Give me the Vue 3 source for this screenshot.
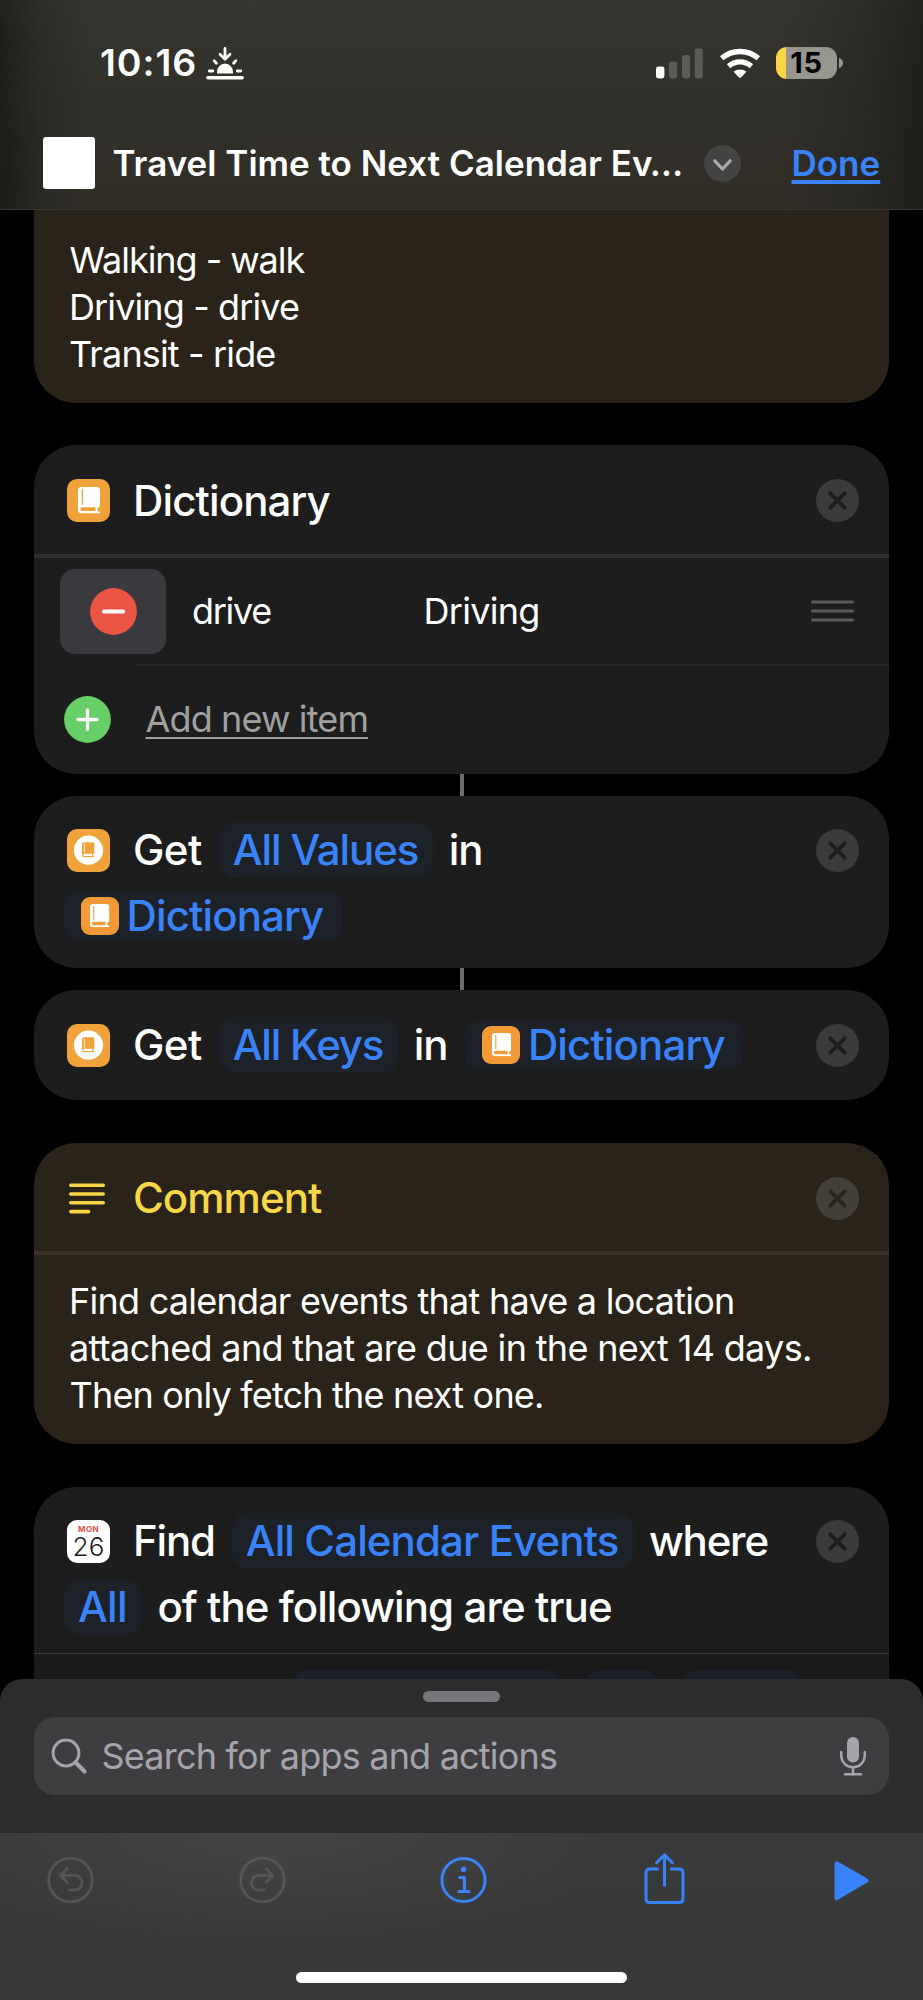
<script setup>
const title = 'Travel Time to Next Calendar Ev…'
const intro = [
  { text: 'Walking - walk', cls: 'l-walk' },
  { text: 'Driving - drive', cls: 'l-drive' },
  { text: 'Transit - ride', cls: 'l-ride' }
]
const comment = [
  { text: 'Find calendar events that have a location', cls: 'l-find' },
  { text: 'attached and that are due in the next 14 days.', cls: 'l-attached' },
  { text: 'Then only fetch the next one.', cls: 'l-then' }
]
</script>

<template>
  <div class="screen">
    <svg class="defs" aria-hidden="true">
      <symbol id="book" viewBox="0 0 22 26.4">
        <rect class="ink" x="0" y="0" width="22" height="21" rx="3.6" />
        <path class="ink" d="M0 4H19.6V21Q19 23 20.2 24.4H21Q22 24.5 22 25.4Q22 26.4 21 26.4H4Q0 26.4 0 22.4Z" />
        <path class="gap" d="M4.3 2.2H5V18H4.3Q3.7 18 3.7 17.4V2.8Q3.7 2.2 4.3 2.2Z" />
        <path class="gap" d="M4 20.2H17.8Q17 22.1 17.8 24H4Q2.2 24 2.2 22.1Q2.2 20.2 4 20.2Z" />
      </symbol>
      <symbol id="close" viewBox="0 0 43 43">
        <circle class="disc" cx="21.5" cy="21.5" r="21.5" />
        <path class="cross" d="M14.3 14.3L28.7 28.7M28.7 14.3L14.3 28.7" />
      </symbol>
      <symbol id="getter" viewBox="0 0 43 43">
        <circle cx="21.5" cy="21.2" r="14.6" fill="#fff" />
      </symbol>
    </svg>

    <header class="top">
      <div class="status">
        <span class="time">10:16</span>
        <svg class="sunset" width="38" height="33" viewBox="0 0 38 33">
          <g fill="none" stroke="#fff" stroke-width="2.8" stroke-linecap="round" stroke-linejoin="round">
            <path d="M19 1.5V11.5M14 7.2L19 12.2L24 7.2M3.3 24H6.8M31.2 24H34.7M8.2 13.8L10.4 16.2M29.8 13.8L27.6 16.2" />
            <path d="M1.8 30.8H36.2" stroke-width="3.4" />
          </g>
          <path d="M11 26.5V25.2A8 8.6 0 0 1 27 25.2V26.5Z" fill="#fff" />
        </svg>
        <div class="indicators">
          <svg width="47" height="31" viewBox="0 0 47 31">
            <rect x="0" y="18.5" width="8.4" height="12" rx="2.4" fill="#fff" />
            <g fill="#5b5a54">
              <rect x="13" y="13.5" width="8.2" height="17" rx="2.4" />
              <rect x="26" y="7" width="8.2" height="23.5" rx="2.4" />
              <rect x="38.6" y="0.5" width="8.2" height="30" rx="2.4" />
            </g>
          </svg>
          <svg class="wifi" width="42" height="31" viewBox="0 0 42 31">
            <path d="M2.7 10.3A28 28 0 0 1 39.3 10.3" fill="none" stroke="#fff" stroke-width="5.4" />
            <path d="M9.6 18.2A17.4 17.4 0 0 1 32.4 18.2" fill="none" stroke="#fff" stroke-width="5.2" />
            <path d="M14.6 23.8A10 10 0 0 1 27.4 23.8L22 29.6Q21 30.5 20 29.6Z" fill="#fff" />
          </svg>
          <div class="battery"><span>15</span></div>
          <svg width="4" height="10" viewBox="0 0 4 10"><path d="M0 0Q4 1.4 4 5Q4 8.6 0 10Z" fill="#97968f" /></svg>
        </div>
      </div>
      <div class="titlebar">
        <div class="thumb"></div>
        <h1>{{ title }}</h1>
        <svg class="chevron" width="37" height="37" viewBox="0 0 37 37">
          <circle cx="18.5" cy="18.5" r="18.5" fill="#444444" />
          <path d="M10.8 15.8L18.5 24L26.2 15.8" fill="none" stroke="#aaa9af" stroke-width="3.2" stroke-linecap="round" stroke-linejoin="round" />
        </svg>
        <a class="done">Done</a>
      </div>
    </header>

    <main class="list">
      <section class="card amber first">
        <p v-for="l in intro" :key="l.text" :class="l.cls">{{ l.text }}</p>
      </section>

      <section class="card dict">
        <div class="head">
          <span class="app"><svg class="book" width="22" height="26.4"><use href="#book" /></svg></span>
          <h2 class="w-dict">Dictionary</h2>
          <svg class="close" width="43" height="43"><use href="#close" /></svg>
        </div>
        <div class="item">
          <div class="remove">
            <svg width="47" height="47" viewBox="0 0 47 47">
              <circle cx="23.5" cy="23.5" r="23.4" fill="#ea5545" />
              <path d="M13.8 23.5H33.2" stroke="#fff" stroke-width="3.8" stroke-linecap="round" />
            </svg>
          </div>
          <span class="key">drive</span>
          <span class="value">Driving</span>
          <svg class="grip" width="43" height="22" viewBox="0 0 43 22">
            <path d="M1.5 2H41.5M1.5 11H41.5M1.5 20H41.5" stroke="#5a5a5e" stroke-width="3" stroke-linecap="round" />
          </svg>
        </div>
        <div class="rule"></div>
        <div class="add">
          <svg width="47" height="47" viewBox="0 0 47 47">
            <circle cx="23.5" cy="23.5" r="23.4" fill="#68ce67" />
            <path d="M14 23.5H33M23.5 14V33" stroke="#fff" stroke-width="3.4" stroke-linecap="round" />
          </svg>
          <span>Add new item</span>
        </div>
      </section>

      <div class="link"></div>

      <section class="card values">
        <div class="line">
          <span class="app"><svg width="43" height="43"><use href="#getter" /></svg><svg class="book mini" width="12.6" height="15.6"><use href="#book" /></svg></span>
          <span class="w-get">Get</span>
          <span class="pill g17 w-values">All Values</span>
          <span class="g16 w-in">in</span>
          <svg class="close" width="43" height="43"><use href="#close" /></svg>
        </div>
        <div class="line second">
          <span class="token"><span class="app small"><svg class="book" width="19.4" height="23.4"><use href="#book" /></svg></span><span class="w-dict">Dictionary</span></span>
        </div>
      </section>

      <div class="link"></div>

      <section class="card keys">
        <div class="line">
          <span class="app"><svg width="43" height="43"><use href="#getter" /></svg><svg class="book mini" width="12.6" height="15.6"><use href="#book" /></svg></span>
          <span class="w-get">Get</span>
          <span class="pill g17 w-keys">All Keys</span>
          <span class="g16 w-in">in</span>
          <span class="token g18"><span class="app small"><svg class="book" width="19.4" height="23.4"><use href="#book" /></svg></span><span class="w-dict">Dictionary</span></span>
          <svg class="close" width="43" height="43"><use href="#close" /></svg>
        </div>
      </section>

      <section class="card amber note">
        <div class="head">
          <svg class="lines" width="36" height="31" viewBox="0 0 36 31">
            <path d="M1.8 2.2H34.2M1.8 11H34.2M1.8 19.8H34.2M1.8 28.6H19.6" stroke="#f9d648" stroke-width="3.6" stroke-linecap="round" />
          </svg>
          <h2 class="w-comment">Comment</h2>
          <svg class="close" width="43" height="43"><use href="#close" /></svg>
        </div>
        <div class="text">
          <p v-for="l in comment" :key="l.text" :class="l.cls">{{ l.text }}</p>
        </div>
      </section>

      <section class="card find">
        <div class="line">
          <span class="app cal"><b>MON</b><i>26</i></span>
          <span class="w-find">Find</span>
          <span class="pill g17 w-events">All Calendar Events</span>
          <span class="g16 w-where">where</span>
          <svg class="close" width="43" height="43"><use href="#close" /></svg>
        </div>
        <div class="line second">
          <span class="pill w-all">All</span>
          <span class="g16 w-of">of the following are true</span>
        </div>
        <div class="filters">
          <span class="ghost a"></span><span class="ghost b"></span><span class="ghost c"></span>
        </div>
      </section>
    </main>

    <section class="sheet">
      <div class="panel">
        <div class="handle"></div>
        <div class="search">
          <svg width="37" height="37" viewBox="0 0 37 37">
            <circle cx="15" cy="15" r="12.9" fill="none" stroke="#a5a4ac" stroke-width="3" />
            <path d="M24.6 24.6L33.6 33.6" stroke="#a5a4ac" stroke-width="4.2" stroke-linecap="round" />
          </svg>
          <span>Search for apps and actions</span>
          <svg class="mic" width="26" height="39" viewBox="0 0 26 39">
            <rect x="7" y="0" width="12" height="25.4" rx="6" fill="#a5a4ac" />
            <path d="M1.2 15V18.5A11.8 11.8 0 0 0 24.8 18.5V15M13 30.5V37M5 37.2H21" fill="none" stroke="#a5a4ac" stroke-width="2.5" stroke-linecap="round" />
          </svg>
        </div>
      </div>
    </section>

    <footer class="toolbar">
      <nav>
        <svg width="47" height="52" viewBox="0 0 47 52" fill="none" stroke="#555555" stroke-width="2.8" stroke-linecap="round" stroke-linejoin="round">
          <circle cx="23.5" cy="27" r="21.8" />
          <path d="M20.4 15.4L13.4 22.4L20.4 29.4M13.8 22.4H27.6A7.4 7.4 0 0 1 27.6 37.2H22.6" />
        </svg>
        <svg width="47" height="52" viewBox="0 0 47 52" fill="none" stroke="#555555" stroke-width="2.8" stroke-linecap="round" stroke-linejoin="round">
          <circle cx="23.5" cy="27" r="21.8" />
          <path d="M27 15.4L34 22.4L27 29.4M33.6 22.4H19.8A7.4 7.4 0 0 0 19.8 37.2H24.8" />
        </svg>
        <svg width="47" height="52" viewBox="0 0 47 52" fill="none" stroke="#3a82f7" stroke-width="3" stroke-linecap="round" stroke-linejoin="round">
          <circle cx="23.5" cy="27" r="21.6" />
          <path d="M19.6 24.4H24.4V38.4M19 38.6H29" />
          <circle cx="23.6" cy="16.2" r="2.8" fill="#3a82f7" stroke="none" />
        </svg>
        <svg width="47" height="52" viewBox="0 0 47 52" fill="none" stroke="#3a82f7" stroke-width="3" stroke-linecap="round" stroke-linejoin="round">
          <path d="M23.5 32.3V2M15.6 9.8L23.5 1.9L31.4 9.8" />
          <path d="M17.8 16H9Q5 16 5 20V45.4Q5 49.4 9 49.4H38Q42 49.4 42 45.4V20Q42 16 38 16H29.2" stroke-linecap="butt" />
        </svg>
        <svg width="47" height="52" viewBox="0 0 47 52">
          <path d="M8.5 10.8V45Q8.5 48.4 11.8 46.8L41.6 29.2Q43.8 27.5 41.6 25.8L11.8 8.5Q8.5 7.4 8.5 10.8Z" fill="#3a82f7" />
        </svg>
      </nav>
      <div class="home"></div>
    </footer>
  </div>
</template>

<style>
html, body { background: #000; }
</style>

<style scoped>
.screen {
  width: 923px; height: 2000px; overflow: hidden; background: #000; color: #fff;
  font-family: Inter, "Liberation Sans", sans-serif;
  display: flex; flex-direction: column;
}
.screen *, .screen { box-sizing: border-box; }
.defs { position: absolute; width: 0; height: 0; }
h1, h2, p { margin: 0; white-space: nowrap; }
svg { display: block; flex: none; }
span, a { white-space: nowrap; }

.top {
  height: 210px; flex: none; border-bottom: 1px solid #35352e;
  background:
    linear-gradient(90deg, rgba(10, 12, 10, .5) 0, rgba(10, 12, 10, .2) 40px, transparent 90px, transparent 780px, rgba(10, 12, 10, .2) 860px, rgba(10, 12, 10, .48) 923px),
    linear-gradient(180deg, #36352f 0, #32302a 45%, #312e28 100%);
}
.status { height: 126px; display: flex; align-items: center; padding: 0 80px 0 100px; }
.time { font-size: 37.5px; font-weight: 600; letter-spacing: .95px; line-height: 50px; }
.sunset { margin-left: 9px; }
.indicators { display: flex; align-items: center; margin-left: auto; }
.wifi { margin: 0 15px 0 16px; }
.battery {
  width: 61px; height: 32px; border-radius: 11px; margin-right: 2px;
  background: linear-gradient(90deg, #f9d648 10px, #97968f 10px);
  display: flex; align-items: center; justify-content: center; color: #000;
}
.battery span { font-size: 29px; font-weight: 700; line-height: 32px; letter-spacing: .8px; }
.titlebar { height: 74px; display: flex; align-items: center; padding-left: 43px; }
.thumb { width: 52px; height: 52px; border-radius: 3px; background: #fff; }
h1 { font-size: 35px; font-weight: 600; margin-left: 17.5px; line-height: 50px; width: 591px; }
.chevron { margin-right: 51px; }
.done {
  font-size: 35px; font-weight: 600; line-height: 50px; color: #3a82f7;
  text-decoration: underline 3.5px; text-underline-offset: 4px; text-decoration-skip-ink: none;
}

.list { flex: 1; min-height: 0; overflow: hidden; padding: 0 34px; display: flex; flex-direction: column; }
.card { flex: none; background: #1d1d1d; border-radius: 42px; overflow: hidden; }
.amber { background: #2a2319; }
.card p { font-size: 36px; line-height: 47px; }
.first { height: 193px; border-radius: 0 0 42px 42px; padding: 27px 0 0 35px; }
.l-walk { letter-spacing: -1.05px; text-indent: .5px; }
.l-drive { letter-spacing: -.88px; }
.l-ride { letter-spacing: -.85px; }
.l-find { letter-spacing: -.743px; }
.l-attached { letter-spacing: -.663px; }
.l-then { letter-spacing: -.818px; text-indent: .5px; }

.head { display: flex; align-items: center; padding: 2px 30px 0 33px; }
.head .close, .line .close { margin-left: auto; }
.close { --disc: #3b3b3d; --hole: #1d1d1d; }
.amber .close { --disc: #454037; --hole: #2a2319; }
.disc { fill: var(--disc); }
.cross { stroke: var(--hole); stroke-width: 3.8; stroke-linecap: round; fill: none; }
h2 { font-size: 42px; font-weight: 500; line-height: 56px; margin-left: 23px; }
.w-dict { letter-spacing: -.87px; }
.w-comment { letter-spacing: -.952px; color: #f9d648; }

.app {
  width: 43px; height: 43px; border-radius: 10px; background: #f0a33b; flex: none;
  display: grid; place-items: center;
}
.app > * { grid-area: 1 / 1; }
.book { --ink: #fff; --gap: #f0a33b; }
.book.mini { --ink: #f0a33b; --gap: #fff; }
.ink { fill: var(--ink); }
.gap { fill: var(--gap); }
.small { width: 38px; height: 38px; border-radius: 9px; background: #f29a37; }
.small .book { --gap: #f29a37; }

.dict { height: 329px; margin-top: 42px; }
.dict .head { height: 113px; border-bottom: 4px solid #303033; }
.item { height: 106px; display: flex; align-items: center; padding: 0 35px 0 26px; font-size: 36px; line-height: 48px; }
.remove { width: 106px; height: 85px; border-radius: 15px; background: #3a393e; display: grid; place-items: center; margin-right: 26px; }
.key { width: 231.5px; letter-spacing: -1.3px; }
.value { letter-spacing: -.723px; }
.grip { margin-left: auto; }
.rule { height: 2px; margin-left: 103px; background: #29292b; }
.add { display: flex; align-items: center; height: 106px; padding-left: 30px; font-size: 36px; }
.add span {
  margin-left: 34.5px; line-height: 48px; letter-spacing: -.86px; color: #a0a0a0;
  text-decoration: underline 2px; text-underline-offset: 5px; text-decoration-skip-ink: none;
}

.link { width: 4px; height: 22px; flex: none; background: #6b6b72; align-self: center; }

.line { display: flex; align-items: center; height: 56px; padding: 0 30px 0 33px; font-size: 42px; font-weight: 500; line-height: 56px; }
.line > .app + span { margin-left: 23px; }
.pill { background: #1d2229; color: #3a82f7; border-radius: 17px; height: 56px; padding: 0 14.5px 0 14px; }
.token { background: #1d2229; color: #3a82f7; border-radius: 13px; height: 49px; padding: 0 18.5px 0 17px; display: flex; align-items: center; gap: 7.5px; }
.g16 { margin-left: 16px; }
.g17 { margin-left: 17px; }
.g18 { margin-left: 18px; }
.w-get { letter-spacing: -.534px; }
.w-values { letter-spacing: -1.114px; }
.w-keys { letter-spacing: -1.197px; }
.w-in { letter-spacing: -1.08px; }
.w-find { letter-spacing: -1.2px; }
.w-events { letter-spacing: -.9px; }
.w-where { letter-spacing: -1.175px; }
.w-all { letter-spacing: -.68px; }
.w-of { letter-spacing: -.93px; }

.values { height: 172px; padding-top: 26px; }
.values .second { height: 49px; margin-top: 13px; padding-left: 30px; }
.keys { height: 110px; padding-top: 27px; }

.note { height: 301px; margin-top: 43px; }
.note .head { height: 112px; border-bottom: 4px solid #3a3228; padding-left: 35px; }
.note h2 { margin-left: 28px; }
.text { padding: 23px 0 0 35px; }

.find { height: 230px; margin-top: 43px; padding-top: 26px; }
.find .second { margin-top: 10px; padding-left: 30px; }
.cal { background: #fff; display: flex; flex-direction: column; align-items: center; justify-content: flex-start; }
.cal b { font-size: 8px; line-height: 10px; font-weight: 700; color: #ea4e46; letter-spacing: .4px; margin-top: 4px; }
.cal i { font-size: 26px; line-height: 26px; font-style: normal; font-weight: 300; color: #1d1d1d; letter-spacing: .3px; }
.filters { margin-top: 18px; border-top: 1px solid #3a3a3b; height: 90px; padding: 16px 0 0 257px; display: flex; background: linear-gradient(#1c1c1c, #19191b 26px); }
.ghost { height: 56px; border-radius: 17px; background: #1c2028; }
.a { width: 271px; margin-right: 22px; }
.b { width: 75px; margin-right: 23px; }
.c { width: 120px; }

.sheet { height: 154px; flex: none; background: #000; }
.panel { height: 154px; border-radius: 22px 22px 0 0; background: #2c2c2c; padding: 12px 34px 0; display: flex; flex-direction: column; align-items: center; }
.handle { width: 77px; height: 11px; border-radius: 6px; background: #77767b; }
.search { align-self: stretch; margin-top: 15px; height: 78px; border-radius: 21px; background: #3e3e40; display: flex; align-items: center; padding: 0 23px 0 17px; }
.search span { font-size: 36px; line-height: 48px; letter-spacing: -.801px; color: #a5a4ac; margin-left: 13.5px; }
.mic { margin-left: auto; }

.toolbar {
  height: 167px; flex: none; display: flex; flex-direction: column; align-items: center;
  background:
    radial-gradient(ellipse 360px 110px at 270px 0, rgba(86, 86, 88, .4), transparent),
    linear-gradient(180deg, #3a3a3a, #37383a);
}
nav { align-self: stretch; display: flex; padding: 20px 0 0 47px; }
nav svg:nth-child(2) { margin-left: 145px; }
nav svg:nth-child(3) { margin-left: 154px; }
nav svg:nth-child(4) { margin-left: 154px; }
nav svg:nth-child(5) { margin-left: 138px; }
.home { width: 331px; height: 11px; border-radius: 6px; background: #fdfdfd; margin-top: 67px; }
</style>
